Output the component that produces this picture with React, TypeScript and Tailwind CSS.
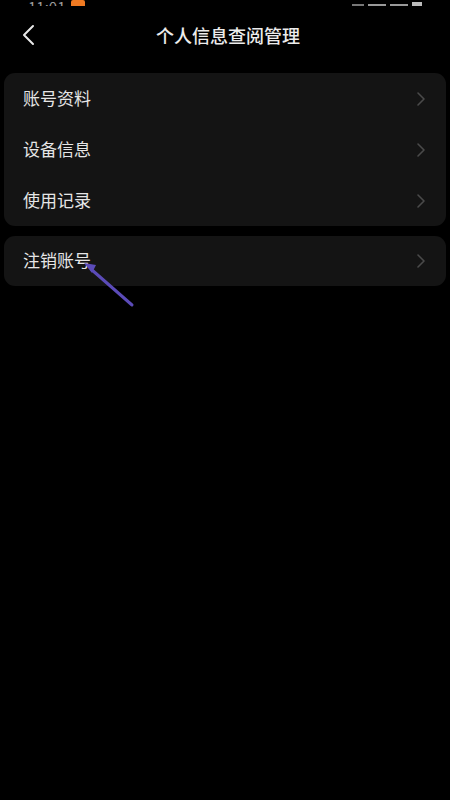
import React from 'react';

const font = { fontFamily: '"Noto Sans CJK SC", "Noto Sans", sans-serif' };

const Chevron = () => (
  <svg width="10" height="16" viewBox="0 0 10 16" fill="none" className="shrink-0">
    <path d="M2 2l6 6-6 6" stroke="#4a4a4a" strokeWidth="1.6" strokeLinecap="round" strokeLinejoin="round" />
  </svg>
);

const Row: React.FC<{ label: string; h?: string }> = ({ label, h = 'h-[51px]' }) => (
  <div className={`flex items-center justify-between pl-[19px] pr-[20px] ${h}`}>
    <span className="text-[17px] text-[#e6e6e6] leading-none mt-[-3px]">{label}</span>
    <Chevron />
  </div>
);

export default function App() {
  return (
    <div className="w-[450px] h-[800px] bg-black overflow-hidden relative" style={font}>
      {/* status bar, cut off at the top */}
      <div className="h-[6px] overflow-hidden flex items-end justify-between px-[28px]">
        <div className="flex items-end gap-[6px] translate-y-[8px]">
          <span className="text-[15px] text-[#9a9a9a] leading-none">11:01</span>
          <span className="w-[14px] h-[14px] bg-[#f07a22] rounded-[2px]" />
        </div>
        <div className="flex items-end gap-[4px] translate-y-[8px]">
          <span className="w-[12px] h-[10px] bg-[#777]" />
          <span className="w-[18px] h-[10px] bg-[#999]" />
          <span className="w-[18px] h-[10px] bg-[#999]" />
          <span className="w-[10px] h-[12px] bg-[#bbb]" />
        </div>
      </div>

      {/* header */}
      <div className="h-[60px] flex items-center relative">
        <svg width="14" height="22" viewBox="0 0 14 22" fill="none" className="ml-[22px] mt-[-2px]">
          <path d="M11 2L2 11l9 9" stroke="#e8e8e8" strokeWidth="2" strokeLinecap="round" strokeLinejoin="round" />
        </svg>
        <div className="absolute left-0 right-0 text-center text-[18px] text-[#ececec] font-medium pl-[6px] mt-[-2px]">
          个人信息查阅管理
        </div>
      </div>

      <div className="px-[4px] pt-[7px] flex flex-col gap-[10px]">
        <div className="bg-[#141414] rounded-[11px]">
          <Row label="账号资料" />
          <Row label="设备信息" />
          <Row label="使用记录" />
        </div>
        <div className="bg-[#141414] rounded-[11px]">
          <Row label="注销账号" h="h-[50px]" />
        </div>
      </div>

      {/* annotation arrow */}
      <svg className="absolute left-0 top-0" width="450" height="800" fill="none">
        <line x1="92" y1="270" x2="132" y2="305" stroke="#5b4bb8" strokeWidth="3" strokeLinecap="round" />
        <path d="M84 263l12 2-4 8z" fill="#5b4bb8" />
      </svg>
    </div>
  );
}
